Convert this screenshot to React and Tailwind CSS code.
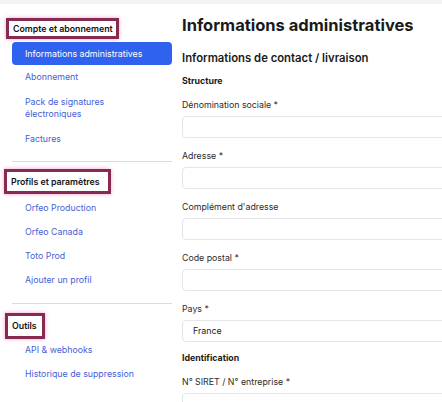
import React from 'react'

const font = { fontFamily: 'Inter, "Noto Sans", sans-serif' }

function Marked({ children, className }) {
  // annotation box drawn over the section titles
  return (
    <div
      className={`flex items-center whitespace-nowrap border-[3px] border-[#862a52] bg-white pl-[4px] text-[8.8px] font-semibold text-[#111] shadow-[0_0_4px_rgba(236,120,180,0.7)] ${className}`}
    >
      {children}
    </div>
  )
}

function NavLink({ children, className = 'h-[24px]' }) {
  return (
    <div className={`flex items-center whitespace-nowrap pl-[25px] text-[8.8px] leading-[12px] text-[#4561d6] ${className}`}>
      {children}
    </div>
  )
}

function Field({ label, value, first }) {
  return (
    <div className={first ? '' : 'mt-[11px]'}>
      <div className="h-[14px] text-[8.8px] leading-[14px] text-[#2b2b2b]">{label}</div>
      <div className="mt-[4px] flex h-[22px] w-[300px] items-center rounded-[4px] border border-[#e3e5e8] bg-white pl-[10px] text-[8.8px] text-[#222]">
        {value}
      </div>
    </div>
  )
}

export default function App() {
  return (
    <div className="h-[402px] w-[442px] overflow-hidden bg-white" style={font}>
      <div className="h-[4px] bg-[#f3f4f5]" />
      <div className="flex">
        {/* Sidebar */}
        <div className="flex w-[182px] shrink-0 flex-col">
          <Marked className="ml-[6px] mt-[14px] h-[21px] w-[113px]">Compte et abonnement</Marked>
          <div className="ml-[12px] mt-[3px] flex h-[23px] w-[160px] items-center whitespace-nowrap rounded-[4px] bg-[#2f62ee] pl-[13px] text-[8.8px] text-white">
            Informations administratives
          </div>
          <NavLink>Abonnement</NavLink>
          <NavLink className="py-[7px]">
            Pack de signatures
            <br />
            électroniques
          </NavLink>
          <NavLink>Factures</NavLink>
          <div className="ml-[12px] mt-[10px] h-px w-[160px] bg-[#dcdcdc]" />
          <Marked className="ml-[4px] mt-[7px] h-[25px] w-[107px]">Profils et paramètres</Marked>
          <div className="mt-[2px]">
            <NavLink>Orfeo Production</NavLink>
            <NavLink>Orfeo Canada</NavLink>
            <NavLink>Toto Prod</NavLink>
            <NavLink>Ajouter un profil</NavLink>
          </div>
          <div className="ml-[12px] mt-[11px] h-px w-[160px] bg-[#dcdcdc]" />
          <Marked className="ml-[5px] mt-[9px] h-[26px] w-[40px]">Outils</Marked>
          <div className="-mt-[1px]">
            <NavLink>API &amp; webhooks</NavLink>
            <NavLink>Historique de suppression</NavLink>
          </div>
        </div>

        {/* Main */}
        <div className="flex min-w-0 flex-1 flex-col">
          <h1 className="mt-[10px] h-[22px] whitespace-nowrap text-[16.5px] font-bold leading-[22px] text-[#1a1a1a]">
            Informations administratives
          </h1>
          <h2 className="mt-[13px] h-[18px] whitespace-nowrap text-[11.3px] font-semibold leading-[18px] text-[#1a1a1a]">
            Informations de contact / livraison
          </h2>
          <div className="mt-[7px] h-[14px] text-[8.8px] font-bold leading-[14px] text-[#1a1a1a]">Structure</div>
          <div className="mt-[10px]">
            <Field first label="Dénomination sociale *" />
            <Field label="Adresse *" />
            <Field label="Complément d'adresse" />
            <Field label="Code postal *" />
            <Field label="Pays *" value="France" />
          </div>
          <div className="mt-[9px] h-[14px] text-[8.8px] font-bold leading-[14px] text-[#1a1a1a]">Identification</div>
          <div className="mt-[10px]">
            <Field first label="N° SIRET / N° entreprise *" />
          </div>
        </div>
      </div>
    </div>
  )
}
